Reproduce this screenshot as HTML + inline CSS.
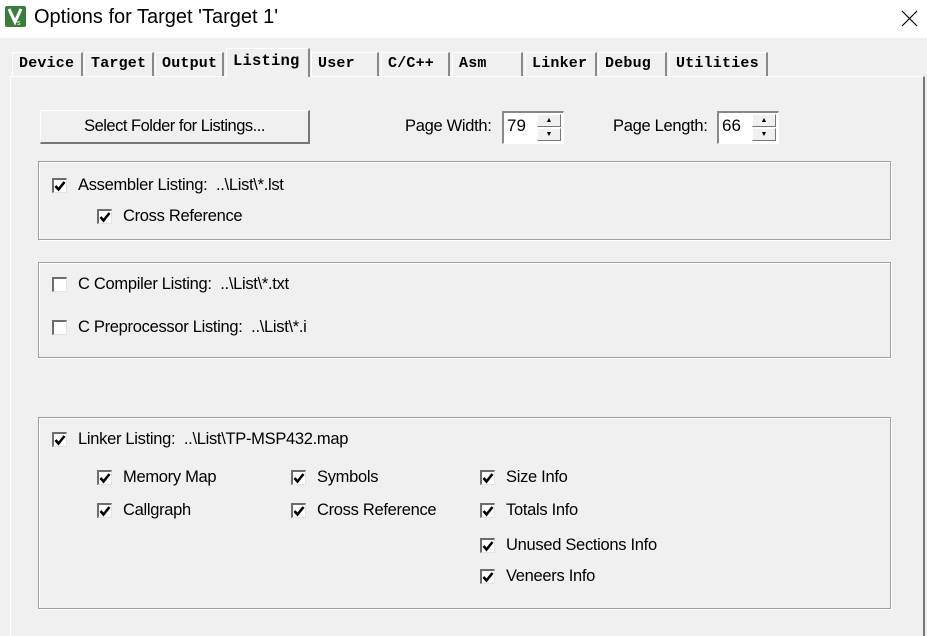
<!DOCTYPE html>
<html><head><meta charset="utf-8"><style>
*{margin:0;padding:0;box-sizing:border-box}
body{width:927px;height:613px;overflow:hidden;background:#f0f0f0;position:relative;font-family:"Liberation Sans",sans-serif;font-size:16.5px;color:#000}
.a{position:absolute;white-space:nowrap}
.tb{position:absolute;left:0;top:0;width:927px;height:38px;background:#fff}
.tab{position:absolute;top:52px;height:24px;border-top:1px solid #fff;border-left:1px solid #fff;border-right:2px solid #888;font-family:"Liberation Mono",monospace;font-weight:bold;font-size:15px;padding:2px 0 0 6px;background:#f0f0f0;letter-spacing:0.2px}
.panel{position:absolute;left:10px;top:76px;width:915px;height:560px;border-top:1px solid #fff;border-left:1px solid #fff;border-right:2px solid #777}
.grp{position:absolute;border:1px solid #a0a0a0;box-shadow:inset 1px 1px 0 #fff,1px 1px 0 #fff}
.cb{position:absolute;width:15px;height:15px;background:#fff;border-top:2px solid #6d6d6d;border-left:2px solid #6d6d6d;border-right:1px solid #e3e3e3;border-bottom:1px solid #e3e3e3}
.cb svg{position:absolute;left:0;top:0}
.t{position:absolute;white-space:nowrap;letter-spacing:-0.3px}
.spin{position:absolute;width:62px;height:33px;background:#fff;border-top:2px solid #888;border-left:2px solid #888;border-right:1px solid #fff;border-bottom:1px solid #fff}
.spin span{position:absolute;left:3px;top:3px;font-size:17px}
.sb{position:absolute;right:2px;width:24px;height:13px;background:#f0f0f0;border:1px solid #fff;border-right-color:#777;border-bottom-color:#777;font-size:7px;text-align:center;line-height:11px}
</style></head><body>
<div class="tb"></div>
<svg class="a" style="left:5px;top:6px" width="21" height="21"><rect width="21" height="21" rx="2" fill="#3a7d3a"/><path d="M4 3 L10 16 L16 3" stroke="#fff" stroke-width="3" fill="none"/><text x="12" y="19" font-size="7" fill="#fff" font-family="Liberation Sans">s</text></svg>
<div class="a" style="left:34px;top:6px;font-size:20px">Options for Target 'Target 1'</div>
<svg class="a" style="left:901px;top:10px" width="17" height="17"><path d="M1 1L16 16M16 1L1 16" stroke="#000" stroke-width="1.2"/></svg>

<div class="panel"></div>
<div class="tab" style="left:12px;width:71px">Device</div>
<div class="tab" style="left:84px;width:70px">Target</div>
<div class="tab" style="left:155px;width:69px">Output</div>
<div class="tab" style="left:226px;width:84px;top:48px;height:29px;border-bottom:none;font-size:15.5px;padding-top:3px">Listing</div>
<div class="tab" style="left:311px;width:68px">User</div>
<div class="tab" style="left:381px;width:69px">C/C++</div>
<div class="tab" style="left:452px;width:71px">Asm</div>
<div class="tab" style="left:525px;width:72px">Linker</div>
<div class="tab" style="left:598px;width:69px">Debug</div>
<div class="tab" style="left:669px;width:99px">Utilities</div>

<div class="a" style="left:40px;top:110px;width:270px;height:34px;border:1px solid #fff;border-right:2px solid #777;border-bottom:2px solid #777;background:#f0f0f0;text-align:center;line-height:31px;letter-spacing:-0.5px">Select Folder for Listings...</div>
<div class="t" style="left:405px;top:117px">Page Width:</div>
<div class="spin" style="left:502px;top:111px"><span>79</span><div class="sb" style="top:1px">▲</div><div class="sb" style="top:15px">▼</div></div>
<div class="t" style="left:613px;top:117px">Page Length:</div>
<div class="spin" style="left:717px;top:111px"><span>66</span><div class="sb" style="top:1px">▲</div><div class="sb" style="top:15px">▼</div></div>

<div class="grp" style="left:38px;top:161px;width:853px;height:79px"></div>
<div class="grp" style="left:38px;top:262px;width:853px;height:96px"></div>
<div class="grp" style="left:38px;top:417px;width:853px;height:192px"></div>

<div class="cb" style="left:52px;top:178px"><svg width="12" height="12"><path d="M1.5 6L4.5 9.5L10.5 2" stroke="#000" stroke-width="2.6" fill="none"/></svg></div>
<div class="t" style="left:78px;top:176px">Assembler Listing:&nbsp; ..\List\*.lst</div>
<div class="cb" style="left:97px;top:209px"><svg width="12" height="12"><path d="M1.5 6L4.5 9.5L10.5 2" stroke="#000" stroke-width="2.6" fill="none"/></svg></div>
<div class="t" style="left:123px;top:207px">Cross Reference</div>

<div class="cb" style="left:52px;top:277px"></div>
<div class="t" style="left:78px;top:275px">C Compiler Listing:&nbsp; ..\List\*.txt</div>
<div class="cb" style="left:52px;top:320px"></div>
<div class="t" style="left:78px;top:318px">C Preprocessor Listing:&nbsp; ..\List\*.i</div>

<div class="cb" style="left:52px;top:432px"><svg width="12" height="12"><path d="M1.5 6L4.5 9.5L10.5 2" stroke="#000" stroke-width="2.6" fill="none"/></svg></div>
<div class="t" style="left:78px;top:430px">Linker Listing:&nbsp; ..\List\TP-MSP432.map</div>

<div class="cb" style="left:97px;top:470px"><svg width="12" height="12"><path d="M1.5 6L4.5 9.5L10.5 2" stroke="#000" stroke-width="2.6" fill="none"/></svg></div>
<div class="t" style="left:123px;top:468px">Memory Map</div>
<div class="cb" style="left:97px;top:503px"><svg width="12" height="12"><path d="M1.5 6L4.5 9.5L10.5 2" stroke="#000" stroke-width="2.6" fill="none"/></svg></div>
<div class="t" style="left:123px;top:501px">Callgraph</div>

<div class="cb" style="left:291px;top:470px"><svg width="12" height="12"><path d="M1.5 6L4.5 9.5L10.5 2" stroke="#000" stroke-width="2.6" fill="none"/></svg></div>
<div class="t" style="left:317px;top:468px">Symbols</div>
<div class="cb" style="left:291px;top:503px"><svg width="12" height="12"><path d="M1.5 6L4.5 9.5L10.5 2" stroke="#000" stroke-width="2.6" fill="none"/></svg></div>
<div class="t" style="left:317px;top:501px">Cross Reference</div>

<div class="cb" style="left:480px;top:470px"><svg width="12" height="12"><path d="M1.5 6L4.5 9.5L10.5 2" stroke="#000" stroke-width="2.6" fill="none"/></svg></div>
<div class="t" style="left:506px;top:468px">Size Info</div>
<div class="cb" style="left:480px;top:503px"><svg width="12" height="12"><path d="M1.5 6L4.5 9.5L10.5 2" stroke="#000" stroke-width="2.6" fill="none"/></svg></div>
<div class="t" style="left:506px;top:501px">Totals Info</div>
<div class="cb" style="left:480px;top:538px"><svg width="12" height="12"><path d="M1.5 6L4.5 9.5L10.5 2" stroke="#000" stroke-width="2.6" fill="none"/></svg></div>
<div class="t" style="left:506px;top:536px">Unused Sections Info</div>
<div class="cb" style="left:480px;top:569px"><svg width="12" height="12"><path d="M1.5 6L4.5 9.5L10.5 2" stroke="#000" stroke-width="2.6" fill="none"/></svg></div>
<div class="t" style="left:506px;top:567px">Veneers Info</div>
</body></html>
